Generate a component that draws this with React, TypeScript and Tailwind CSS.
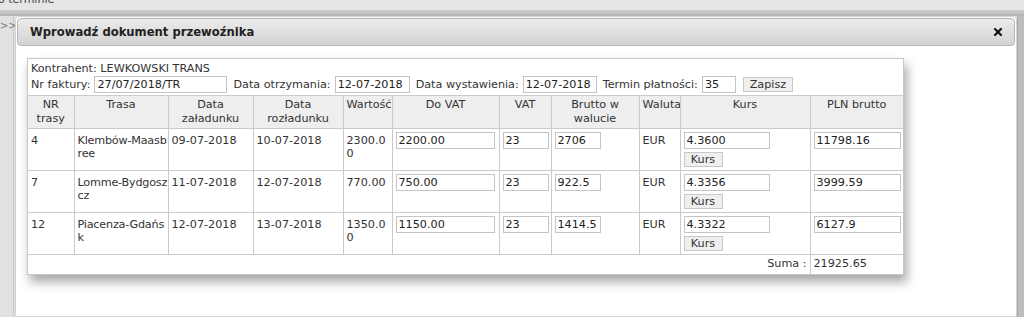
import React from 'react';

type Row = {
  nr: string;
  trasa: string[];
  zal: string;
  roz: string;
  wart: string[];
  doVat: string;
  vat: string;
  brutto: string;
  waluta: string;
  kurs: string;
  pln: string;
};

const rows: Row[] = [
  { nr: '4', trasa: ['Klembów-Maasb', 'ree'], zal: '09-07-2018', roz: '10-07-2018', wart: ['2300.0', '0'], doVat: '2200.00', vat: '23', brutto: '2706', waluta: 'EUR', kurs: '4.3600', pln: '11798.16' },
  { nr: '7', trasa: ['Lomme-Bydgosz', 'cz'], zal: '11-07-2018', roz: '12-07-2018', wart: ['770.00'], doVat: '750.00', vat: '23', brutto: '922.5', waluta: 'EUR', kurs: '4.3356', pln: '3999.59' },
  { nr: '12', trasa: ['Piacenza-Gdańs', 'k'], zal: '12-07-2018', roz: '13-07-2018', wart: ['1350.0', '0'], doVat: '1150.00', vat: '23', brutto: '1414.5', waluta: 'EUR', kurs: '4.3322', pln: '6127.9' },
];

const inputCls =
  'block h-[17px] border border-[#c4c4c4] bg-white px-[2px] text-[11.2px] leading-[15px] text-[#222] outline-none';
const btnCls =
  'h-[15px] border border-[#c8c8c8] bg-[#efefef] px-[5px] text-[11.2px] leading-[13px] text-[#333]';
const td = 'border border-[#cacaca] align-top px-[3px] whitespace-nowrap overflow-hidden';
const th = 'border border-[#cacaca] align-top px-[3px] py-[2px] font-normal text-center leading-[14px] overflow-hidden';

function Lines({ lines }: { lines: string[] }) {
  return (
    <>
      {lines.map((l, i) => (
        <div key={i}>{l}</div>
      ))}
    </>
  );
}

export default function App() {
  return (
    <div className="relative w-[1024px] h-[317px] overflow-hidden bg-[#e2e2e2] font-['DejaVu_Sans',Verdana,sans-serif] text-[11.2px] text-[#333]">
      {/* page behind the dialog */}
      <div className="h-[10px] overflow-hidden bg-[#e6e6e6]">
        <div className="-mt-[7px] -ml-[2px] text-[11px] leading-[14px] text-[#444]">o terminie</div>
      </div>
      <div className="h-[6px] bg-gradient-to-b from-[#cdcdcd] to-[#b4b4b4]" />
      <div className="flex h-[301px]">
        <div className="w-[14px] border-r border-[#c9c9c9] bg-[#e1e1e1]">
          <div className="pt-[4px] text-[10px] leading-[12px] text-[#777]">&gt;&gt;</div>
        </div>
        <div className="flex-1" />
        <div className="w-[7px] border-l border-[#a9a9a9] bg-[#bdbdbd]" />
      </div>

      {/* dialog */}
      <div className="absolute left-[15px] top-[16px] bottom-0 w-[1002px] border border-[#d2d2d2] rounded-t-[4px] bg-white p-[1px]">
        <div className="flex h-[28px] items-center justify-between rounded-[4px] border border-[#b4b4b4] bg-gradient-to-b from-[#ececec] to-[#d2d2d2] pl-[12px] pr-[12px]">
          <span className="pt-[1px] text-[11.6px] font-bold text-[#222]">Wprowadź dokument przewoźnika</span>
          <svg width="8" height="8" viewBox="0 0 8 8">
            <path d="M1 1 L7 7 M7 1 L1 7" stroke="#111" strokeWidth="2.2" strokeLinecap="square" />
          </svg>
        </div>

        <div className="ml-[10px] mt-[12px] w-[877px] border border-[#c6c6c6] bg-white shadow-[3px_7px_10px_rgba(0,0,0,0.35)]">
          <div className="pl-[3px] pt-[3px] leading-[14px]">Kontrahent: LEWKOWSKI TRANS</div>
          <div className="flex h-[17px] items-center pl-[3px] mb-[2px] leading-[14px]">
            <span>Nr faktury:</span>
            <input className={inputCls + ' ml-[4px] w-[133px]'} defaultValue="27/07/2018/TR" />
            <span className="ml-[6px]">Data otrzymania:</span>
            <input className={inputCls + ' ml-[4px] w-[75px]'} defaultValue="12-07-2018" />
            <span className="ml-[6px]">Data wystawienia:</span>
            <input className={inputCls + ' ml-[4px] w-[74px]'} defaultValue="12-07-2018" />
            <span className="ml-[6px]">Termin płatności:</span>
            <input className={inputCls + ' ml-[4px] w-[34px]'} defaultValue="35" />
            <button className={btnCls + ' ml-[7px] w-[50px]'}>Zapisz</button>
          </div>
          <div className="border-t border-[#cacaca]">
            <table className="w-full table-fixed border-collapse border-hidden">
              <colgroup>
                <col className="w-[46px]" />
                <col className="w-[94px]" />
                <col className="w-[85px]" />
                <col className="w-[90px]" />
                <col className="w-[49px]" />
                <col className="w-[107px]" />
                <col className="w-[52px]" />
                <col className="w-[88px]" />
                <col className="w-[41px]" />
                <col className="w-[130px]" />
                <col />
              </colgroup>
              <thead>
                <tr className="bg-[#eeeeee] h-[32px]">
                  <th className={th}>NR<br />trasy</th>
                  <th className={th}>Trasa</th>
                  <th className={th}>Data<br />załadunku</th>
                  <th className={th}>Data<br />rozładunku</th>
                  <th className={th + ' whitespace-nowrap'}>Wartość</th>
                  <th className={th}>Do VAT</th>
                  <th className={th}>VAT</th>
                  <th className={th}>Brutto w<br />walucie</th>
                  <th className={th + ' whitespace-nowrap'}>Waluta</th>
                  <th className={th}>Kurs</th>
                  <th className={th}>PLN brutto</th>
                </tr>
              </thead>
              <tbody>
                {rows.map((r) => (
                  <tr key={r.nr} className="h-[42px]">
                    <td className={td + ' pt-[5px] leading-[13px]'}>{r.nr}</td>
                    <td className={td + ' pt-[5px] pr-0 leading-[13px] tracking-[-0.2px]'}><Lines lines={r.trasa} /></td>
                    <td className={td + ' pt-[5px] leading-[13px]'}>{r.zal}</td>
                    <td className={td + ' pt-[5px] leading-[13px]'}>{r.roz}</td>
                    <td className={td + ' pt-[5px] leading-[13px]'}><Lines lines={r.wart} /></td>
                    <td className={td + ' pt-[3px]'}>
                      <input className={inputCls + ' w-[99px]'} defaultValue={r.doVat} />
                    </td>
                    <td className={td + ' pt-[3px]'}>
                      <input className={inputCls + ' w-[46px]'} defaultValue={r.vat} />
                    </td>
                    <td className={td + ' pt-[3px]'}>
                      <input className={inputCls + ' w-[46px]'} defaultValue={r.brutto} />
                    </td>
                    <td className={td + ' pt-[5px] leading-[13px]'}>{r.waluta}</td>
                    <td className={td + ' pt-[3px] pb-[3px]'}>
                      <input className={inputCls + ' w-[86px]'} defaultValue={r.kurs} />
                      <button className={btnCls + ' mt-[3px] block w-[39px]'}>Kurs</button>
                    </td>
                    <td className={td + ' pt-[3px]'}>
                      <input className={inputCls + ' w-[87px]'} defaultValue={r.pln} />
                    </td>
                  </tr>
                ))}
                <tr className="h-[19px]">
                  <td colSpan={10} className="border border-[#cacaca] px-[3px] text-right leading-[14px]">Suma :</td>
                  <td className="border border-[#cacaca] px-[3px] leading-[14px]">21925.65</td>
                </tr>
              </tbody>
            </table>
          </div>
        </div>
      </div>
    </div>
  );
}
